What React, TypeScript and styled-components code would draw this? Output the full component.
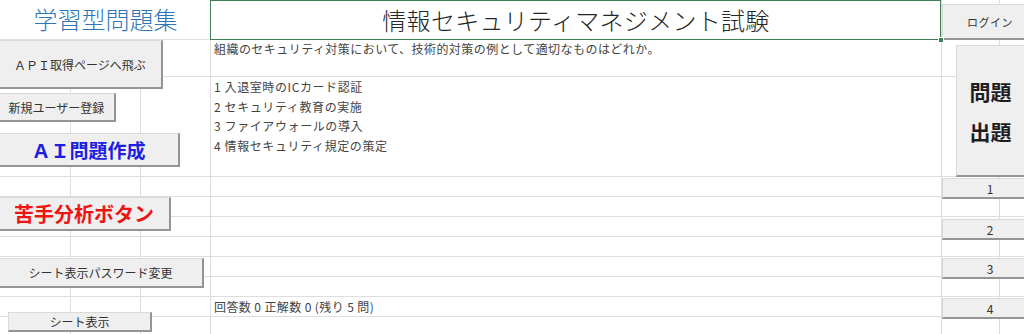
import React from 'react';
import styled, { createGlobalStyle, css } from 'styled-components';

const GlobalStyle = createGlobalStyle`
  html, body { margin: 0; padding: 0; background: #fff; }
  body {
    font-family: "Noto Sans CJK JP", "Noto Sans", sans-serif;
    overflow: hidden;
  }
`;

const Sheet = styled.div`
  position: relative;
  width: 1024px;
  height: 334px;
  overflow: hidden;
  background: #fff;
`;

const Grid = styled.div`
  display: grid;
  grid-template-columns: 71px 70px 70px 731px 58px 70px;
  grid-template-rows: 40px 37px 100px repeat(8, 20px);
`;

const Cell = styled.div<{ $span?: number }>`
  box-sizing: border-box;
  min-width: 0;
  border-right: 1px solid #dedede;
  border-bottom: 1px solid #dedede;
  grid-column: span ${(p) => p.$span ?? 1};
  color: #404040;
  font-size: 12px;
  white-space: nowrap;
`;

const AppTitleCell = styled(Cell)`
  display: flex;
  align-items: center;
  justify-content: center;
  padding-bottom: 3px;
  font-size: 24px;
  font-weight: 300;
  color: #2e75b6;
  border-right: none;
`;

const SheetTitleCell = styled(Cell)`
  position: relative;
  display: flex;
  align-items: center;
  justify-content: center;
  font-size: 24px;
  font-weight: 300;
  letter-spacing: 0.3px;
  color: #262626;
  &::after {
    content: '';
    position: absolute;
    inset: 0 0 -1px -1px;
    border: 1px solid #3f7f57;
    pointer-events: none;
  }
`;

const FillHandle = styled.span`
  position: absolute;
  right: -3px;
  bottom: -4px;
  width: 4px;
  height: 4px;
  background: #3f7f57;
  border: 1px solid #fff;
  z-index: 1;
`;

const QuestionCell = styled(Cell)`
  padding: 1px 3px 0;
  line-height: 16px;
  color: #444;
  letter-spacing: 0.45px;
`;

const AnswerCell = styled(Cell)`
  display: flex;
  flex-direction: column;
  padding-left: 3px;
  line-height: 19.7px;
  color: #444;
  letter-spacing: 0.6px;
`;

const StatusCell = styled(Cell)`
  padding-left: 3px;
  line-height: 19px;
  color: #444;
  letter-spacing: 0.4px;
`;

type Tone = 'plain' | 'blue' | 'red' | 'dark';

const toneCss: Record<Tone, ReturnType<typeof css>> = {
  plain: css`
    color: #333;
    font-size: 12px;
  `,
  blue: css`
    color: #1e1ee0;
    font-size: 19px;
    font-weight: 700;
  `,
  red: css`
    color: #ee1414;
    font-size: 20px;
    font-weight: 700;
  `,
  dark: css`
    color: #1e1e1e;
    font-size: 21px;
    font-weight: 700;
    line-height: 40px;
  `,
};

const FormButton = styled.button<{
  $x: number;
  $y: number;
  $w: number;
  $h: number;
  $tone?: Tone;
}>`
  position: absolute;
  left: ${(p) => p.$x}px;
  top: ${(p) => p.$y}px;
  width: ${(p) => p.$w}px;
  height: ${(p) => p.$h}px;
  box-sizing: border-box;
  margin: 0;
  padding: 0;
  display: flex;
  align-items: center;
  justify-content: center;
  text-align: center;
  white-space: nowrap;
  font-family: inherit;
  background: #efefef;
  border: 1px solid #d9d9d9;
  border-right: 2px solid #949494;
  border-bottom: 2px solid #949494;
  cursor: pointer;
  ${(p) => toneCss[p.$tone ?? 'plain']}
`;

const SmallLabel = styled.span`
  font-size: 11px;
  letter-spacing: 0.5px;
`;

const NumLabel = styled.span`
  font-size: 12px;
  color: #333;
`;

const answers = [
  '1 入退室時のICカード認証',
  '2 セキュリティ教育の実施',
  '3 ファイアウォールの導入',
  '4 情報セキュリティ規定の策定',
];

const plainRows = 8;

export default function App() {
  return (
    <>
      <GlobalStyle />
      <Sheet>
        <Grid>
          <AppTitleCell $span={3}>学習型問題集</AppTitleCell>
          <SheetTitleCell>
            情報セキュリティマネジメント試験
            <FillHandle />
          </SheetTitleCell>
          <Cell />
          <Cell />

          <Cell />
          <Cell />
          <Cell />
          <QuestionCell>
            組織のセキュリティ対策において、技術的対策の例として適切なものはどれか。
          </QuestionCell>
          <Cell />
          <Cell />

          <Cell />
          <Cell />
          <Cell />
          <AnswerCell>
            {answers.map((a) => (
              <span key={a}>{a}</span>
            ))}
          </AnswerCell>
          <Cell />
          <Cell />

          {Array.from({ length: plainRows }).map((_, r) => (
            <React.Fragment key={r}>
              <Cell />
              <Cell />
              <Cell />
              {r === 6 ? (
                <StatusCell>回答数 0 正解数 0 (残り 5 問)</StatusCell>
              ) : (
                <Cell />
              )}
              <Cell />
              <Cell />
            </React.Fragment>
          ))}
        </Grid>

        <FormButton $x={-2} $y={40} $w={165} $h={49}>
          ＡＰＩ取得ページへ飛ぶ
        </FormButton>
        <FormButton $x={-2} $y={93} $w={118} $h={29}>
          新規ユーザー登録
        </FormButton>
        <FormButton $x={-2} $y={133} $w={182} $h={34} $tone="blue">
          ＡＩ問題作成
        </FormButton>
        <FormButton $x={-2} $y={197} $w={173} $h={34} $tone="red">
          苦手分析ボタン
        </FormButton>
        <FormButton $x={-2} $y={258} $w={206} $h={30}>
          シート表示パスワード変更
        </FormButton>
        <FormButton $x={8} $y={312} $w={144} $h={20}>
          シート表示
        </FormButton>

        <FormButton $x={942} $y={4} $w={97} $h={36}>
          <SmallLabel>ログイン</SmallLabel>
        </FormButton>
        <FormButton $x={956} $y={45} $w={70} $h={132} $tone="dark">
          <span>
            問題
            <br />
            出題
          </span>
        </FormButton>
        {[
          { n: 1, y: 178 },
          { n: 2, y: 219 },
          { n: 3, y: 258 },
          { n: 4, y: 298 },
        ].map((b) => (
          <FormButton key={b.n} $x={942} $y={b.y} $w={97} $h={21}>
            <NumLabel>{b.n}</NumLabel>
          </FormButton>
        ))}
      </Sheet>
    </>
  );
}
